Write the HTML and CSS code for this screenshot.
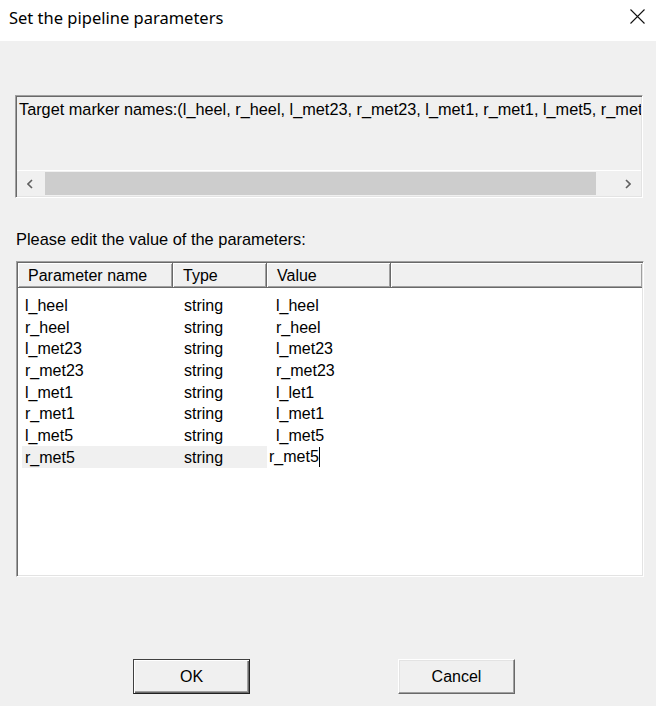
FILE: index.html
```html
<!DOCTYPE html>
<html lang="en">

<head>
  <meta charset="UTF-8" />
  <meta name="viewport" content="width=device-width, initial-scale=1.0" />
  <title>Set the pipeline parameters</title>
  <link rel="stylesheet" href="styles.css">
</head>

<body>
  <!-- Title bar -->
  <div class="titlebar">
    <span class="title">Set the pipeline parameters</span>
    <svg class="close-icon" width="15" height="15" viewBox="0 0 15 15">
      <path d="M0.5 0.5 L14.5 14.5 M14.5 0.5 L0.5 14.5" stroke="#111" stroke-width="1.1" fill="none" />
    </svg>
  </div>

  <div class="dialog-body">
    <!-- Read-only box with the target marker names -->
    <div class="info-box">
      <div class="info-text">Target marker names:(l_heel, r_heel, l_met23, r_met23, l_met1, r_met1, l_met5, r_met5)</div>
      <div class="hscroll">
        <div class="scroll-arrow">
          <svg width="6" height="10" viewBox="0 0 6 10">
            <polyline points="5,1 1,5 5,9" stroke="#606060" stroke-width="1.6" fill="none" />
          </svg>
        </div>
        <div class="scroll-track">
          <div class="scroll-thumb"></div>
        </div>
        <div class="scroll-arrow">
          <svg width="6" height="10" viewBox="0 0 6 10">
            <polyline points="1,1 5,5 1,9" stroke="#606060" stroke-width="1.6" fill="none" />
          </svg>
        </div>
      </div>
    </div>

    <p class="label">Please edit the value of the parameters:</p>

    <!-- Parameter list -->
    <div class="listview">
      <div class="list-header">
        <div class="head-item col-name">Parameter name</div>
        <div class="head-item col-type">Type</div>
        <div class="head-item col-value">Value</div>
        <div class="head-item col-filler"></div>
      </div>

      <div class="list-rows">
        <div class="row"><span class="cell col-name">l_heel</span><span class="cell col-type">string</span><span class="cell col-value">l_heel</span></div>
        <div class="row"><span class="cell col-name">r_heel</span><span class="cell col-type">string</span><span class="cell col-value">r_heel</span></div>
        <div class="row"><span class="cell col-name">l_met23</span><span class="cell col-type">string</span><span class="cell col-value">l_met23</span></div>
        <div class="row"><span class="cell col-name">r_met23</span><span class="cell col-type">string</span><span class="cell col-value">r_met23</span></div>
        <div class="row"><span class="cell col-name">l_met1</span><span class="cell col-type">string</span><span class="cell col-value">l_let1</span></div>
        <div class="row"><span class="cell col-name">r_met1</span><span class="cell col-type">string</span><span class="cell col-value">l_met1</span></div>
        <div class="row"><span class="cell col-name">l_met5</span><span class="cell col-type">string</span><span class="cell col-value">l_met5</span></div>
        <div class="row row-editing">
          <div class="row-select">
            <span class="cell col-name">r_met5</span><span class="cell col-type">string</span>
          </div>
          <span class="cell-edit">r_met5<span class="caret"></span></span>
        </div>
      </div>
    </div>

    <!-- Dialog buttons -->
    <div class="buttons">
      <button class="btn btn-default">OK</button>
      <button class="btn">Cancel</button>
    </div>
  </div>
</body>

</html>
```

FILE: styles.css
```css
body {
  margin: 0;
  background: #f0f0f0;
  font-family: "Liberation Sans", Arial, sans-serif;
  font-size: 16px;
  color: #000;
}

/* Title bar */
.titlebar {
  height: 41px;
  background: #fff;
  display: flex;
  justify-content: space-between;
  align-items: flex-start;
}

.title {
  font-family: "Noto Sans", "Open Sans", sans-serif;
  font-size: 16.5px;
  line-height: 24px;
  padding: 6px 0 0 9px;
  color: #000;
}

.close-icon {
  margin: 9px 11px 0 0;
}

.dialog-body {
  display: flex;
  flex-direction: column;
}

/* Read-only text box with scrollbar */
.info-box {
  margin: 54px 0 0 15px;
  width: 628px;
  height: 103px;
  box-sizing: border-box;
  border-top: 1px solid #a0a0a0;
  border-left: 1px solid #a0a0a0;
  border-right: 1px solid #fff;
  border-bottom: 1px solid #fff;
  box-shadow: inset 1px 1px #696969, inset -1px -1px #e3e3e3;
  padding: 1px;
  display: flex;
  flex-direction: column;
}

.info-text {
  flex: 1;
  padding: 3px 0 0 2px;
  font-size: 16.3px;
  line-height: 18px;
  white-space: nowrap;
  overflow: hidden;
}

.hscroll {
  height: 25px;
  display: flex;
  border-top: 1px solid #fff;
  background: #f0f0f0;
}

.scroll-arrow {
  width: 26px;
  display: flex;
  justify-content: center;
  align-items: center;
}

.scroll-track {
  flex: 1;
  padding: 1px 0 1px 2px;
  display: flex;
}

.scroll-thumb {
  width: 551px;
  background: #cdcdcd;
}

.label {
  margin: 32px 0 0 16px;
  font-size: 16.4px;
  line-height: 18px;
}

/* List view */
.listview {
  margin: 13px 0 0 16px;
  width: 628px;
  height: 316px;
  box-sizing: border-box;
  border-top: 1px solid #a0a0a0;
  border-left: 1px solid #a0a0a0;
  border-right: 1px solid #fff;
  border-bottom: 1px solid #fff;
  box-shadow: inset 1px 1px #696969, inset -1px -1px #e3e3e3;
  padding: 1px;
  background: #fff;
}

.list-header {
  display: flex;
  height: 25px;
}

.head-item {
  box-sizing: border-box;
  background: #f0f0f0;
  border-right: 1px solid #696969;
  border-bottom: 1px solid #696969;
  box-shadow: inset 1px 1px #fff, inset -1px -1px #a0a0a0;
  padding-left: 10px;
  line-height: 25px;
  white-space: nowrap;
}

.head-item.col-filler {
  flex: 1;
  border-right: none;
}

.col-name {
  width: 155px;
}

.col-type {
  width: 94px;
}

.col-value {
  width: 124px;
}

.list-rows {
  padding-top: 6px;
}

.row {
  display: flex;
  height: 21.7px;
  line-height: 23px;
  white-space: nowrap;
}

.cell {
  box-sizing: border-box;
}

.cell.col-name {
  padding-left: 7px;
}

.cell.col-type {
  padding-left: 11px;
}

.cell.col-value {
  padding-left: 9px;
}

/* Row that is being edited */
.row-select {
  display: flex;
  margin-left: 4px;
  width: 245px;
  background: #f0f0f0;
}

.row-select .col-name {
  width: 151px;
  padding-left: 3px;
}

.cell-edit {
  padding-left: 2px;
  display: flex;
  align-items: center;
}

.caret {
  width: 1px;
  height: 20px;
  background: #000;
}

/* Buttons */
.buttons {
  display: flex;
  gap: 148px;
  margin: 82px 0 0 133px;
}

.btn {
  width: 117px;
  height: 35px;
  box-sizing: border-box;
  font-family: "Liberation Sans", Arial, sans-serif;
  font-size: 16px;
  color: #000;
  background: #f0f0f0;
  border-top: 1px solid #fff;
  border-left: 1px solid #fff;
  border-right: 1px solid #696969;
  border-bottom: 1px solid #696969;
  box-shadow: inset -1px -1px #a0a0a0, inset 1px 1px #e3e3e3;
  padding: 0;
}

.btn-default {
  border: 1px solid #404040;
  border-right-color: #202020;
  border-bottom-color: #202020;
  box-shadow: inset 1px 1px #fff, inset -1px -1px #696969, inset -2px -2px #a0a0a0;
}
```
